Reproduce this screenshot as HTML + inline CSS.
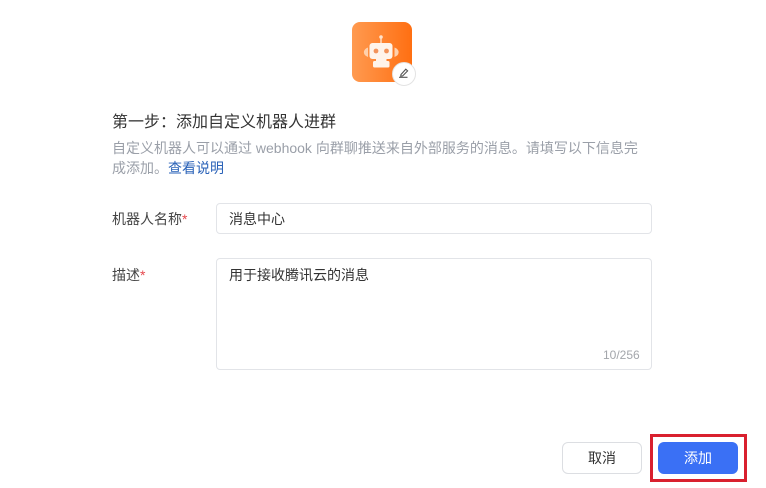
<!DOCTYPE html>
<html lang="zh">
<head>
<meta charset="utf-8">
<style>
html,body{margin:0;padding:0;background:#fff;}
body{width:766px;height:488px;position:relative;overflow:hidden;font-family:"Liberation Sans","Noto Sans CJK SC",sans-serif;color:#333;}
.a{position:absolute;white-space:nowrap;}
.logo{left:352px;top:22px;width:60px;height:60px;border-radius:8px;background:linear-gradient(90deg,#ff9a50,#ff6f12);}
.badge{left:392px;top:62px;width:24px;height:24px;box-sizing:border-box;border-radius:50%;background:#fff;border:1px solid #e3e3e3;}
.box{border:1px solid #e2e4e8;border-radius:4px;background:#fff;box-sizing:border-box;}
.t14{font-size:14px;line-height:18px;}
i{font-style:normal;color:#e5484d;}
</style>
</head>
<body>
<div class="a logo"></div>
<svg class="a" style="left:352px;top:22px" width="60" height="60" viewBox="0 0 60 60">
<circle cx="29" cy="15" r="1.800" fill="#ffe3cc"/>
<rect x="28.300" y="15" width="1.400" height="6" fill="#ffe3cc"/>
<rect x="17.500" y="21" width="23" height="16" rx="3" fill="#fff4ea"/>
<circle cx="24" cy="29" r="2.400" fill="#f3935a"/>
<circle cx="34.500" cy="29" r="2.400" fill="#f3935a"/>
<rect x="24" y="37" width="10.500" height="3" fill="#fff4ea"/>
<rect x="21" y="39" width="16.500" height="6.500" rx="1.500" fill="#fff4ea"/>
<path d="M16 25.500a6 5 0 0 0 0 9.500z" fill="#ffd0ab"/>
<path d="M42.500 25.500a6 5 0 0 1 0 9.500z" fill="#ffd0ab"/>
</svg>
<div class="a badge"></div>
<svg class="a" style="left:396px;top:66px" width="16" height="16" viewBox="0 0 16 16" fill="none" stroke="#555" stroke-width="1.100">
<path d="M5 8.500 9.800 3.200l1.800 1.700-4.900 5-2 .3z"/>
<path d="M3 11.300h8.500"/>
</svg>

<div class="a" style="left:112px;top:113px;font-size:16px;line-height:20px;color:#333">第一步：添加自定义机器人进群</div>
<div class="a t14" style="left:112px;top:138px;color:#9a9fa8;line-height:20px">自定义机器人可以通过 webhook 向群聊推送来自外部服务的消息。请填写以下信息完</div>
<div class="a t14" style="left:112px;top:158px;color:#9a9fa8;line-height:20px">成添加。<span style="color:#2a62b8">查看说明</span></div>

<div class="a t14" style="left:112px;top:210px;color:#444">机器人名称<i>*</i></div>
<div class="a box" style="left:216px;top:203px;width:436px;height:31px"></div>
<div class="a t14" style="left:229px;top:210px;color:#333">消息中心</div>

<div class="a t14" style="left:112px;top:266px;color:#444">描述<i>*</i></div>
<div class="a box" style="left:216px;top:258px;width:436px;height:112px"></div>
<div class="a t14" style="left:229px;top:266px;color:#333">用于接收腾讯云的消息</div>
<div class="a" style="left:603px;top:347px;font-size:12px;line-height:16px;color:#a3a6ab">10/256</div>

<div class="a box" style="left:562px;top:442px;width:80px;height:32px;border-radius:6px;border-color:#dcdee2;text-align:center;font-size:14px;line-height:30px;color:#333">取消</div>
<div class="a" style="left:650px;top:434px;width:97px;height:48px;box-sizing:border-box;border:3px solid #d9202e"></div>
<div class="a" style="left:658px;top:442px;width:80px;height:32px;border-radius:6px;background:#3a70f5;text-align:center;font-size:14px;line-height:32px;color:#fff">添加</div>
</body>
</html>
